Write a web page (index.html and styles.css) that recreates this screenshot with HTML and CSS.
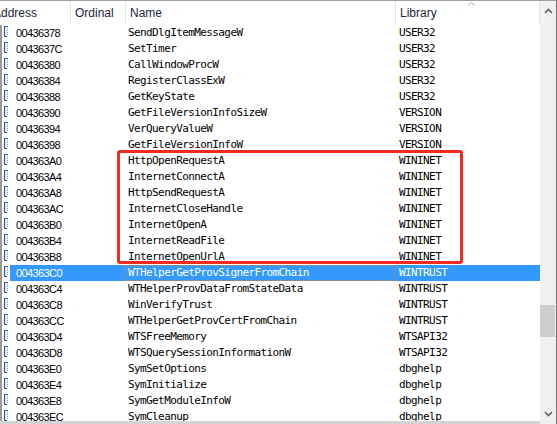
FILE: index.html
```html
<!DOCTYPE html>
<html>
<head>
<meta charset="utf-8">
<link rel="stylesheet" href="styles.css">
</head>
<body>
<div class="window">
  <div class="main">
    <div class="list">
      <div class="header">
        <div class="hcell c1"><span class="clip">Address</span></div>
        <div class="hcell c2">Ordinal</div>
        <div class="hcell c3">Name</div>
        <div class="hcell c4">Library
          <svg class="sort" width="7" height="4" viewBox="0 0 7 4"><path d="M0.5 3.5 L3.5 0.5 L6.5 3.5" fill="none" stroke="#a0a0a0" stroke-width="1"/></svg>
        </div>
      </div>
      <div class="rows" id="rows"></div>
      <div class="annot"></div>
    </div>
    <div class="hstrip"></div>
  </div>
  <div class="vscroll">
    <svg class="arrow" width="9" height="6" viewBox="0 0 9 6"><path d="M1 5 L4.5 1.5 L8 5" fill="none" stroke="#606060" stroke-width="1.6"/></svg>
    <div class="track"><div class="thumb"></div></div>
    <svg class="arrow" width="9" height="6" viewBox="0 0 9 6"><path d="M1 1 L4.5 4.5 L8 1" fill="none" stroke="#606060" stroke-width="1.6"/></svg>
  </div>
</div>
<script>
const data = [
["00436378","SendDlgItemMessageW","USER32"],
["0043637C","SetTimer","USER32"],
["00436380","CallWindowProcW","USER32"],
["00436384","RegisterClassExW","USER32"],
["00436388","GetKeyState","USER32"],
["00436390","GetFileVersionInfoSizeW","VERSION"],
["00436394","VerQueryValueW","VERSION"],
["00436398","GetFileVersionInfoW","VERSION"],
["004363A0","HttpOpenRequestA","WININET"],
["004363A4","InternetConnectA","WININET"],
["004363A8","HttpSendRequestA","WININET"],
["004363AC","InternetCloseHandle","WININET"],
["004363B0","InternetOpenA","WININET"],
["004363B4","InternetReadFile","WININET"],
["004363B8","InternetOpenUrlA","WININET"],
["004363C0","WTHelperGetProvSignerFromChain","WINTRUST"],
["004363C4","WTHelperProvDataFromStateData","WINTRUST"],
["004363C8","WinVerifyTrust","WINTRUST"],
["004363CC","WTHelperGetProvCertFromChain","WINTRUST"],
["004363D4","WTSFreeMemory","WTSAPI32"],
["004363D8","WTSQuerySessionInformationW","WTSAPI32"],
["004363E0","SymSetOptions","dbghelp"],
["004363E4","SymInitialize","dbghelp"],
["004363E8","SymGetModuleInfoW","dbghelp"],
["004363EC","SymCleanup","dbghelp"]
];
const icon = '<svg width="5" height="11" viewBox="0 0 5 11"><rect x="0" y="0" width="1" height="11" fill="#2f5597"/><rect x="1" y="0" width="3" height="1" fill="#2f5597"/><rect x="1" y="10" width="2" height="1" fill="#2f5597"/><rect x="1" y="1" width="2" height="9" fill="#dfeaf8"/><rect x="3" y="2" width="1" height="1" fill="#6f9fdc"/><rect x="3" y="4" width="1" height="1" fill="#6f9fdc"/><rect x="3" y="6" width="1" height="1" fill="#6f9fdc"/><rect x="3" y="8" width="1" height="1" fill="#6f9fdc"/></svg>';
const rows = document.getElementById('rows');
data.forEach((d, i) => {
  const r = document.createElement('div');
  r.className = 'row' + (i === 15 ? ' sel' : '');
  r.innerHTML = '<div class="ic">' + icon + '</div><div class="addr">' + d[0] + '</div><div class="ord"></div><div class="name">' + d[1] + '</div><div class="lib">' + d[2] + '</div>';
  rows.appendChild(r);
});
</script>
</body>
</html>
```
FILE: styles.css
```css
html, body {
  margin: 0;
  padding: 0;
  background: #ffffff;
}
.window {
  width: 557px;
  height: 424px;
  box-sizing: border-box;
  border-top: 1px solid #a0a0a0;
  border-right: 1px solid #707070;
  display: flex;
  overflow: hidden;
  background: #fff;
}
.main {
  width: 540px;
  display: flex;
  flex-direction: column;
}
.list {
  position: relative;
  height: 420px;
  overflow: hidden;
}
.header {
  display: flex;
  height: 24px;
  font-family: "Liberation Sans", Arial, sans-serif;
  font-size: 12px;
  color: #1c2640;
}
.hcell {
  box-sizing: border-box;
  border-right: 1px solid #e5e5e5;
  padding: 5px 0 0 4px;
  white-space: nowrap;
  overflow: hidden;
  position: relative;
}
.c1 { width: 71px; padding-left: 0; }
.c1 .clip { margin-left: -7px; display: inline-block; }
.c2 { width: 55px; }
.c3 { width: 270px; }
.c4 { width: 144px; }
.sort {
  position: absolute;
  left: 72px;
  top: 1px;
}
.rows {
  border-left: 2px solid #9c9c9c;
}
.row {
  display: grid;
  grid-template-columns: 8px 60px 55px 270px 145px;
  height: 16px;
  line-height: 16px;
  white-space: nowrap;
  color: #000;
}
.ic {
  padding: 1px 0 0 2px;
  line-height: 0;
}
.addr {
  font-family: "Liberation Sans", Arial, sans-serif;
  font-size: 11px;
  letter-spacing: -0.6px;
  padding-left: 6px;
}
.name, .lib {
  font-family: "DejaVu Sans Mono", "Liberation Mono", monospace;
  font-size: 11px;
  letter-spacing: -0.6px;
  overflow: hidden;
}
.name { padding-left: 3px; }
.lib { padding-left: 4px; }
.row.sel .addr, .row.sel .ord, .row.sel .name, .row.sel .lib {
  background: #3399ff;
  color: #fff;
}
.row.sel .name {
  outline: 1px dotted #d9822b;
  outline-offset: -1px;
}
.annot {
  position: absolute;
  left: 117px;
  top: 149px;
  width: 346px;
  height: 114px;
  box-sizing: border-box;
  border: 3px solid #f52a1e;
  border-radius: 3px;
}
.hstrip {
  height: 3px;
  background: #d4d4d4;
}
.vscroll {
  width: 16px;
  background: #f0f0f0;
  display: flex;
  flex-direction: column;
  align-items: center;
}
.arrow {
  margin: 7px 0;
  flex: none;
}
.track {
  flex: 1;
  width: 100%;
  position: relative;
}
.thumb {
  position: absolute;
  left: 0;
  right: 1px;
  top: 284px;
  height: 32px;
  background: #cdcdcd;
}
```
